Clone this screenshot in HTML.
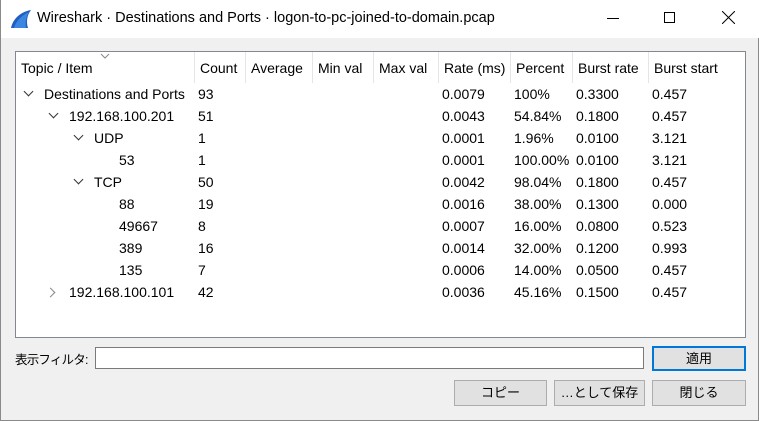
<!DOCTYPE html>
<html><head><meta charset="utf-8"><style>
*{margin:0;padding:0;box-sizing:border-box}
body{width:759px;height:421px;background:#f0f0f0;font-family:"Segoe UI","Liberation Sans","Noto Sans CJK JP",sans-serif;font-size:14px;color:#000;position:relative;overflow:hidden;border:1px solid #8a8a8a;border-top:none}
.title{position:absolute;left:0;top:0;width:759px;height:38px;background:#fff}
.title .t{position:absolute;left:36px;top:10px;font-size:14.5px}
.box{position:absolute;left:14px;top:51px;width:731px;height:287px;background:#fff;border:1px solid #828790}
.hd{position:absolute;top:0;height:31px;line-height:33px;padding-left:5px;border-right:1px solid #e5e5e5}
.c{position:absolute;white-space:nowrap;height:22px;line-height:22px}
.btn{position:absolute;background:#e1e1e1;border:1px solid #adadad;text-align:center;font-size:13px;line-height:23px;font-family:"Liberation Sans","Noto Sans CJK JP",sans-serif}
.chev{position:absolute;width:7px;height:7px;border-right:1.4px solid #333;border-bottom:1.4px solid #333}
</style></head><body>
<div class="title">
<svg style="position:absolute;left:9px;top:9px" width="22" height="20" viewBox="0 0 22 20"><path d="M1 19 C3 10 10 3 21 1 C17 6 16 13 18 19 Z" fill="#1e5fbf"/><path d="M4 19 C6 12 12 6 19 3 C16 8 15 14 16 19Z" fill="#3a86e0"/></svg>
<div class="t">Wireshark · Destinations and Ports · logon-to-pc-joined-to-domain.pcap</div>
<div style="position:absolute;left:606px;top:18px;width:12px;height:1px;background:#000"></div>
<div style="position:absolute;left:663px;top:12px;width:11px;height:11px;border:1px solid #000"></div>
<svg style="position:absolute;left:721px;top:11px" width="13" height="13"><path d="M0 0L13 13M13 0L0 13" stroke="#000" stroke-width="1"/></svg>
</div>
<div class="box">
<div class="hd" style="left:0;width:179px">Topic / Item</div>
<svg style="position:absolute;left:84px;top:1px" width="10" height="6"><path d="M1 1L5 5L9 1" stroke="#888" fill="none"/></svg>
<div class="hd" style="left:179px;width:51px">Count</div>
<div class="hd" style="left:230px;width:67px">Average</div>
<div class="hd" style="left:297px;width:61px">Min val</div>
<div class="hd" style="left:358px;width:65px">Max val</div>
<div class="hd" style="left:423px;width:72px">Rate (ms)</div>
<div class="hd" style="left:495px;width:62px">Percent</div>
<div class="hd" style="left:557px;width:76px">Burst rate</div>
<div class="hd" style="left:633px;width:98px;border-right:none">Burst start</div>
<div id="rows"></div>
</div>
<div style="position:absolute;left:14px;top:349px;font-size:12.5px;letter-spacing:-0.8px;font-family:'Liberation Sans','Noto Sans CJK JP',sans-serif">表示フィルタ:</div>
<div style="position:absolute;left:94px;top:347px;width:549px;height:22px;background:#fff;border:1px solid #7a7a7a"></div>
<div class="btn" style="left:651px;top:346px;width:94px;height:25px;border:2px solid #0078d7;line-height:21px">適用</div>
<div class="btn" style="left:453px;top:380px;width:93px;height:26px">コピー</div>
<div class="btn" style="left:553px;top:380px;width:91px;height:26px">…として保存</div>
<div class="btn" style="left:651px;top:380px;width:94px;height:26px">閉じる</div>
<script>
var d=[[0,1,"Destinations and Ports","93","0.0079","100%","0.3300","0.457"],
[1,1,"192.168.100.201","51","0.0043","54.84%","0.1800","0.457"],
[2,1,"UDP","1","0.0001","1.96%","0.0100","3.121"],
[3,0,"53","1","0.0001","100.00%","0.0100","3.121"],
[2,1,"TCP","50","0.0042","98.04%","0.1800","0.457"],
[3,0,"88","19","0.0016","38.00%","0.1300","0.000"],
[3,0,"49667","8","0.0007","16.00%","0.0800","0.523"],
[3,0,"389","16","0.0014","32.00%","0.1200","0.993"],
[3,0,"135","7","0.0006","14.00%","0.0500","0.457"],
[1,2,"192.168.100.101","42","0.0036","45.16%","0.1500","0.457"]];
var h="";d.forEach(function(r,i){var y=31+i*22;var ind=r[0]*25;
if(r[1]==1)h+='<div class="chev" style="left:'+(9+ind)+'px;top:'+(y+5)+'px;transform:rotate(45deg)"></div>';
if(r[1]==2)h+='<div class="chev" style="left:'+(6+ind)+'px;top:'+(y+8)+'px;transform:rotate(-45deg);border-color:#888"></div>';
h+='<div class="c" style="top:'+y+'px;left:'+(28+ind)+'px">'+r[2]+'</div>';
var xs=[182,426,498,560,636];[3,4,5,6,7].forEach(function(k,j){h+='<div class="c" style="top:'+y+'px;left:'+xs[j]+'px">'+r[k]+'</div>'})});
document.getElementById("rows").innerHTML=h;
</script>
</body></html>
